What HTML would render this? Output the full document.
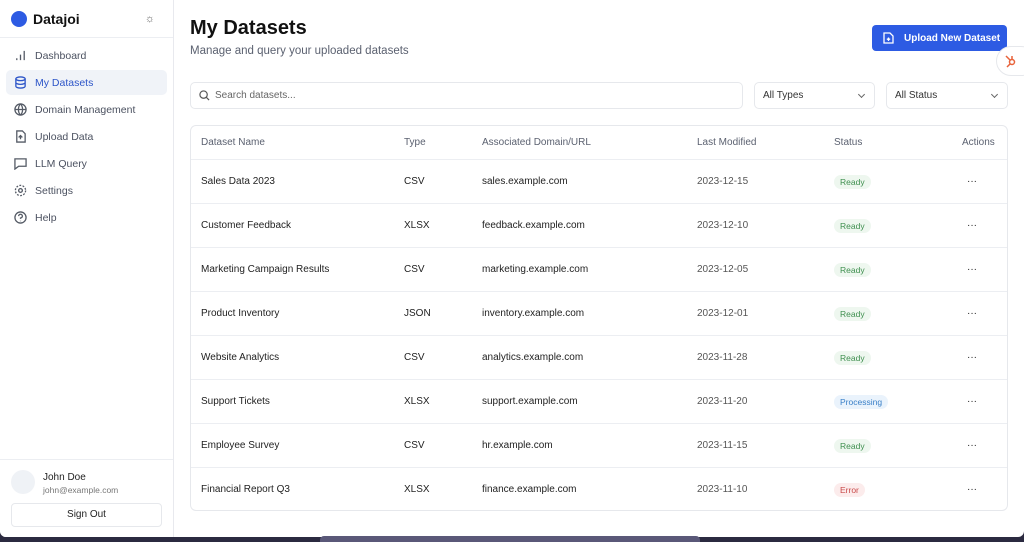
<!DOCTYPE html><html><head><style>
*{box-sizing:border-box;margin:0;padding:0}
body{width:1024px;height:542px;overflow:hidden;background:#2b2a40;font-family:"Liberation Sans",sans-serif;position:relative}
.win{position:absolute;left:0;top:0;width:1024px;height:537px;background:#fff;border-radius:0 0 6px 6px;overflow:hidden}
.side{position:absolute;left:0;top:0;width:174px;height:537px;border-right:1px solid #e8e9ee;background:#fff}
.logo{height:38px;border-bottom:1px solid #eceef2;display:flex;align-items:center;padding-left:11px}
.dot{width:16px;height:16px;border-radius:50%;background:#2d5be3}
.logo b{font-size:14px;margin-left:6px;color:#111}
.nav{position:absolute;left:6px;width:161px;height:25px;display:flex;align-items:center;padding-left:8px;font-size:10.5px;color:#4b5160}
.nav svg{width:13px;height:13px;margin-right:8px;stroke:#555b66;fill:none;stroke-width:1.4}
.nav.act{background:#f0f3f8;color:#2d55c8;border-radius:5px}
.nav.act svg{stroke:#2d55c8}
.main{position:absolute;left:174px;top:0;right:0;height:537px}
h1{position:absolute;left:16px;top:17px;font-size:20px;color:#111}
.sub{position:absolute;left:16px;top:45px;font-size:11.5px;color:#5b6170}
.btn{position:absolute;left:698px;top:25px;width:135px;height:26px;background:#2d5be3;border-radius:4px;color:#fff;font-size:10px;font-weight:bold;display:flex;align-items:center;padding-left:32px}
.box{position:absolute;top:82px;height:27px;border:1px solid #e6e8ec;border-radius:5px;font-size:10px;color:#333;display:flex;align-items:center;padding-left:8px}
.chev{position:absolute;right:10px;top:9px;width:5px;height:5px;border-right:1px solid #666;border-bottom:1px solid #666;transform:rotate(45deg)}
.tbl{position:absolute;left:16px;top:125px;width:818px;height:386px;border:1px solid #e6e8ec;border-radius:6px}
.row{position:absolute;left:0;width:816px;height:44px;border-top:1px solid #eceef2;font-size:10px;color:#222}
.row span{position:absolute;top:16px}
.hd{top:0;height:33px;border-top:none;color:#5b6170}
.hd span{top:11px}
.pill{padding:2px 6px;border-radius:8px;font-size:8.5px;top:15px!important}
.r{background:#eef7ef;color:#3f8f4f}.p{background:#eaf3fc;color:#3a80c8}.e{background:#fcecec;color:#c84a4a}
.hs{position:absolute;left:996px;top:46px;width:40px;height:30px;border:1px solid #e6e8ec;border-radius:15px;background:#fff}
</style></head><body>
<div class="win">
<div class="side">
<div class="logo"><div class="dot"></div><b>Datajoi</b><span style="margin-left:auto;margin-right:18px;color:#666;font-size:11px">☼</span></div>
<div class="nav" style="top:43px"><svg viewBox="0 0 14 14"><path d="M3 12v-2M7 12V6M11 12V2"/></svg>Dashboard</div>
<div class="nav act" style="top:70px"><svg viewBox="0 0 14 14"><ellipse cx="7" cy="3" rx="5" ry="2"/><path d="M2 3v8c0 1 2 2 5 2s5-1 5-2V3M2 7c0 1 2 2 5 2s5-1 5-2"/></svg>My Datasets</div>
<div class="nav" style="top:97px"><svg viewBox="0 0 14 14"><circle cx="7" cy="7" r="6"/><path d="M1 7h12M7 1c-3 3-3 9 0 12M7 1c3 3 3 9 0 12"/></svg>Domain Management</div>
<div class="nav" style="top:124px"><svg viewBox="0 0 14 14"><path d="M3 1h6l3 3v9H3zM7 10V6M5 8l2-2 2 2"/></svg>Upload Data</div>
<div class="nav" style="top:151px"><svg viewBox="0 0 14 14"><path d="M1 2h12v8H5l-4 3z"/></svg>LLM Query</div>
<div class="nav" style="top:178px"><svg viewBox="0 0 14 14"><circle cx="7" cy="7" r="2"/><circle cx="7" cy="7" r="5.5" stroke-dasharray="2 1.5"/></svg>Settings</div>
<div class="nav" style="top:205px"><svg viewBox="0 0 14 14"><circle cx="7" cy="7" r="6"/><path d="M5 5.5a2 2 0 1 1 2 2v1M7 10.5v.5"/></svg>Help</div>
<div style="position:absolute;left:0;top:459px;width:173px;border-top:1px solid #eceef2"></div>
<div style="position:absolute;left:11px;top:470px;width:24px;height:24px;border-radius:50%;background:#eff2f6"></div>
<div style="position:absolute;left:43px;top:472px;font-size:10px;color:#222">John Doe</div>
<div style="position:absolute;left:43px;top:485px;font-size:8.5px;color:#777">john@example.com</div>
<div style="position:absolute;left:11px;top:503px;width:151px;height:24px;border:1px solid #e6e8ec;border-radius:4px;font-size:10px;color:#222;text-align:center;line-height:22px">Sign Out</div>
</div>
<div class="main">
<h1>My Datasets</h1>
<div class="sub">Manage and query your uploaded datasets</div>
<div class="btn"><svg style="position:absolute;left:11px;top:7px" width="11" height="12" viewBox="0 0 11 12" fill="none" stroke="#fff" stroke-width="1.3"><path d="M1 1h6l3 3v7H1zM5.5 9V5.5M3.8 7.2h3.4"/></svg>Upload New Dataset</div>
<div class="box" style="left:16px;width:553px;color:#666"><svg width="11" height="11" viewBox="0 0 12 12" fill="none" stroke="#555" stroke-width="1.3" style="margin-right:5px"><circle cx="5" cy="5" r="4"/><path d="M8 8l3 3"/></svg>Search datasets...</div>
<div class="box" style="left:580px;width:121px">All Types<div class="chev"></div></div>
<div class="box" style="left:712px;width:122px">All Status<div class="chev"></div></div>
<div class="tbl">
<div class="row hd"><span style="left:10px">Dataset Name</span><span style="left:213px">Type</span><span style="left:291px">Associated Domain/URL</span><span style="left:506px">Last Modified</span><span style="left:643px">Status</span><span style="left:771px">Actions</span></div>
<div class="row" style="top:33px"><span style="left:10px">Sales Data 2023</span><span style="left:213px">CSV</span><span style="left:291px">sales.example.com</span><span style="left:506px;color:#555">2023-12-15</span><span class="pill r" style="left:643px">Ready</span><span style="left:776px">···</span></div>
<div class="row" style="top:77px"><span style="left:10px">Customer Feedback</span><span style="left:213px">XLSX</span><span style="left:291px">feedback.example.com</span><span style="left:506px;color:#555">2023-12-10</span><span class="pill r" style="left:643px">Ready</span><span style="left:776px">···</span></div>
<div class="row" style="top:121px"><span style="left:10px">Marketing Campaign Results</span><span style="left:213px">CSV</span><span style="left:291px">marketing.example.com</span><span style="left:506px;color:#555">2023-12-05</span><span class="pill r" style="left:643px">Ready</span><span style="left:776px">···</span></div>
<div class="row" style="top:165px"><span style="left:10px">Product Inventory</span><span style="left:213px">JSON</span><span style="left:291px">inventory.example.com</span><span style="left:506px;color:#555">2023-12-01</span><span class="pill r" style="left:643px">Ready</span><span style="left:776px">···</span></div>
<div class="row" style="top:209px"><span style="left:10px">Website Analytics</span><span style="left:213px">CSV</span><span style="left:291px">analytics.example.com</span><span style="left:506px;color:#555">2023-11-28</span><span class="pill r" style="left:643px">Ready</span><span style="left:776px">···</span></div>
<div class="row" style="top:253px"><span style="left:10px">Support Tickets</span><span style="left:213px">XLSX</span><span style="left:291px">support.example.com</span><span style="left:506px;color:#555">2023-11-20</span><span class="pill p" style="left:643px">Processing</span><span style="left:776px">···</span></div>
<div class="row" style="top:297px"><span style="left:10px">Employee Survey</span><span style="left:213px">CSV</span><span style="left:291px">hr.example.com</span><span style="left:506px;color:#555">2023-11-15</span><span class="pill r" style="left:643px">Ready</span><span style="left:776px">···</span></div>
<div class="row" style="top:341px"><span style="left:10px">Financial Report Q3</span><span style="left:213px">XLSX</span><span style="left:291px">finance.example.com</span><span style="left:506px;color:#555">2023-11-10</span><span class="pill e" style="left:643px">Error</span><span style="left:776px">···</span></div>
</div>
</div>
<div class="hs"><svg style="position:absolute;left:7px;top:7px" width="14" height="14" viewBox="0 0 14 14" fill="none" stroke="#e8623a" stroke-width="1.5"><circle cx="8" cy="8" r="2.5"/><path d="M2 2l4 4M8 5.5V2M6 10l-3 3"/></svg></div>
</div>
<div style="position:absolute;left:320px;top:536px;width:380px;height:6px;background:#5a5878;border-radius:4px 4px 0 0"></div>
</body></html>
